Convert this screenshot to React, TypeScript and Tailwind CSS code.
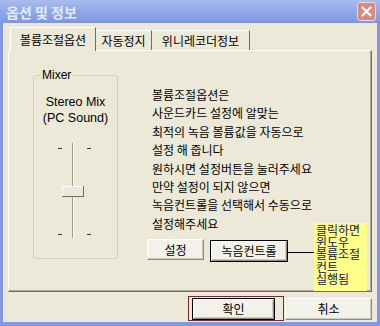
const kr = "font-['Noto_Sans_CJK_KR',sans-serif]";

const lines = [
  "볼륨조절옵션은",
  "사운드카드 설정에 알맞는",
  "최적의 녹음 볼륨값을 자동으로",
  "설정 해 줍니다",
  "원하시면 설정버튼을 눌러주세요",
  "만약 설정이 되지 않으면",
  "녹음컨트롤을 선택해서 수동으로",
  "설정해주세요",
];

const face =
  "bg-[#f2f1ea] border border-t-white border-l-white border-r-[#8e8c7f] border-b-[#8e8c7f] shadow-[inset_-1px_-1px_0_#cdcabb] flex items-center justify-center leading-none";

function Slider() {
  return (
    <svg width="83" height="100" viewBox="0 0 83 100" className="block">
      <line x1="24" y1="7.5" x2="28" y2="7.5" stroke="#333" />
      <line x1="53" y1="7.5" x2="57" y2="7.5" stroke="#333" />
      <line x1="24" y1="93.5" x2="28" y2="93.5" stroke="#333" />
      <line x1="53" y1="93.5" x2="57" y2="93.5" stroke="#333" />
      <rect x="38" y="2" width="1" height="95" fill="#9c9a8c" />
      <rect x="39" y="2" width="1" height="95" fill="#ffffff" />
      <rect x="28" y="45" width="22" height="11" fill="#ebe9de" />
      <line x1="28" y1="45.5" x2="49" y2="45.5" stroke="#ffffff" />
      <line x1="28.5" y1="45" x2="28.5" y2="55" stroke="#ffffff" />
      <line x1="28" y1="55.5" x2="50" y2="55.5" stroke="#716f64" />
      <line x1="49.5" y1="45" x2="49.5" y2="56" stroke="#716f64" />
    </svg>
  );
}

export default function App() {
  return (
    <div className={`w-[380px] h-[326px] flex flex-col bg-[#8198e0] ${kr} text-[12px] text-black overflow-hidden`}>
      <div className="h-[23px] flex items-center justify-between pl-[6px] pr-[4px] bg-gradient-to-b from-[#a9bcef] via-[#91a8e7] to-[#7e96df]">
        <span className="text-[14px] font-bold text-[#e3eafa] leading-none">옵션 및 정보</span>
        <div className="w-[19px] h-[19px] rounded-[3px] border border-[#eed8dc] bg-[#d9897f] flex items-center justify-center">
          <svg width="11" height="11" viewBox="0 0 11 11">
            <path d="M1.5 1.5 L9.5 9.5 M9.5 1.5 L1.5 9.5" stroke="#ffffff" strokeWidth="2.2" strokeLinecap="round" />
          </svg>
        </div>
      </div>

      <div className="flex-1 mx-[3px] mb-[4px] bg-[#ece9d8] flex flex-col pt-[4px] px-[5px]">
        <div className="flex items-start h-[23px] ml-[2px] relative z-10">
          <div className="h-[24px] w-[86px] bg-[#ece9d8] border-t border-l border-t-white border-l-white border-r border-r-[#716f64] rounded-tl-[2px] flex items-center justify-center leading-none">
            볼륨조절옵션
          </div>
          <div className="mt-[3px] h-[20px] w-[56px] border-t border-t-white border-r border-r-[#716f64] flex items-center justify-center leading-none">
            자동정지
          </div>
          <div className="mt-[3px] h-[20px] w-[98px] border-t border-t-white border-r border-r-[#716f64] flex items-center justify-center leading-none">
            위니레코더정보
          </div>
        </div>

        <div className="h-[242px] relative flex border border-t-white border-l-white border-r-[#716f64] border-b-[#716f64] shadow-[inset_-1px_-1px_0_#aca899]">
          <fieldset className="ml-[24px] mt-[17px] w-[85px] h-[191px] border border-[#d0d0bf] rounded-[3px] p-0 m-0">
            <legend className="ml-[7px] px-[1px] font-['Liberation_Sans',sans-serif] text-[12px] leading-[14px]">Mixer</legend>
            <div className="mt-[12px] text-center font-['Liberation_Sans',sans-serif] text-[12.5px] leading-[16px]">
              <div>Stereo Mix</div>
              <div>(PC Sound)</div>
            </div>
            <div className="mt-[15px]">
              <Slider />
            </div>
          </fieldset>

          <div className="ml-[34px] pt-[35px] flex flex-col">
            <div className="leading-[18.4px]">
              {lines.map((l) => (
                <div key={l}>{l}</div>
              ))}
            </div>
            <div className="flex items-start mt-[6px] -ml-[5px] gap-[6px]">
              <div className={`${face} w-[57px] h-[21px]`}>설정</div>
              <div className="mt-[1px] border border-black">
                <div className={`${face} w-[76px] h-[20px]`}>녹음컨트롤</div>
              </div>
            </div>
          </div>

          <div className="absolute left-[278px] top-[201px] w-[27px] h-px bg-black" />
          <div className="absolute left-[305px] top-[172px] w-[53px] h-[68px] bg-[#ffff8a] pl-[2px] pt-[1px] text-[#14144a] text-[12px] leading-[12.2px]">
            <div>클릭하면</div>
            <div>윈도우</div>
            <div>볼륨조절</div>
            <div>컨트</div>
            <div>실행됨</div>
          </div>
        </div>

        <div className="flex justify-end items-start mt-[4px]">
          <div className="h-[25px] w-[96px] border border-[#7a2a26] pt-[1px] pl-[3px]">
            <div className="border border-black w-[83px] h-[22px]">
              <div className={`${face} w-full h-full`}>확인</div>
            </div>
          </div>
          <div className={`${face} ml-px mt-[2px] w-[87px] h-[22px]`}>취소</div>
        </div>
      </div>
    </div>
  );
}
